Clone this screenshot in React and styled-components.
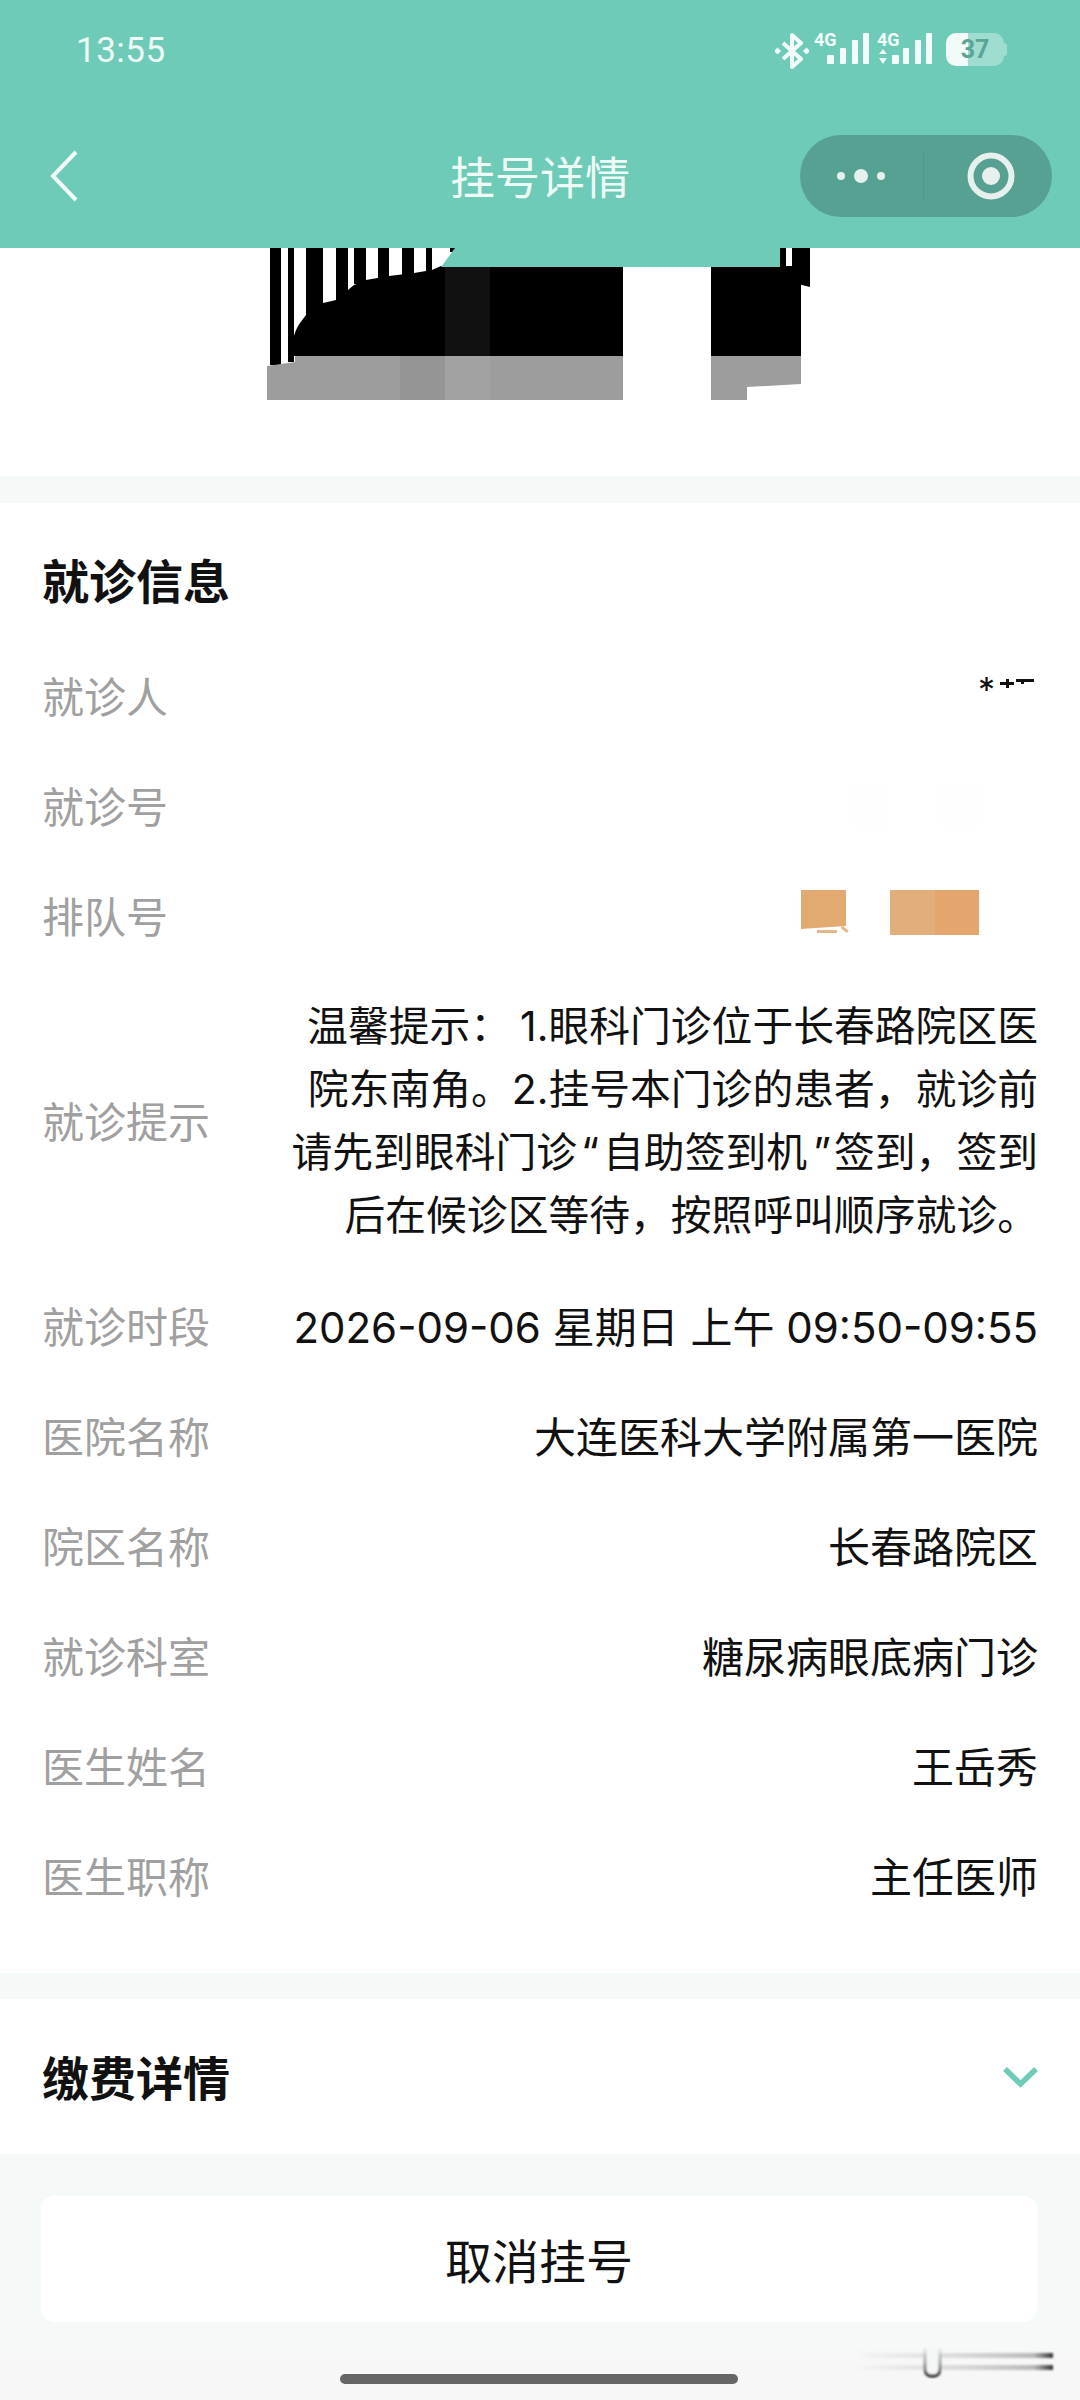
import React from 'react';
import styled, { createGlobalStyle } from 'styled-components';

const GlobalStyle = createGlobalStyle`
  html, body {
    margin: 0;
    padding: 0;
    background: #f5faf9;
  }
  body {
    font-family: Inter, "Noto Sans CJK SC", sans-serif;
  }
`;

const Page = styled.div`
  position: relative;
  width: 1080px;
  height: 2400px;
  overflow: hidden;
  background: linear-gradient(#f5faf9 2340px, #f7f7f7 2360px);
`;

const Header = styled.header`
  height: 248px;
  background: #6dcbb7;
  color: #eefaf6;
`;

const StatusBar = styled.div`
  height: 100px;
  box-sizing: border-box;
  padding: 33px 76px 0 76px;
  display: flex;
  justify-content: space-between;
  align-items: flex-start;
`;

const Clock = styled.span`
  font-family: Roboto, sans-serif;
  font-size: 35px;
  line-height: 35px;
  letter-spacing: 0.5px;
`;

const StatusIcons = styled.div`
  display: flex;
  align-items: flex-start;
  gap: 8px;
`;

const BluetoothSvg = styled.svg`
  margin-right: -3px;
`;

const SignalWrap = styled.div`
  position: relative;
  width: 55px;
  height: 32px;
`;

const NetworkLabel = styled.span`
  position: absolute;
  left: 0;
  top: -2px;
  font-family: Roboto, sans-serif;
  font-weight: 700;
  font-size: 18px;
  line-height: 18px;
  color: #f2fbf9;
`;

const Battery = styled.div`
  position: relative;
  width: 58px;
  height: 33px;
  margin-left: 6px;
  border-radius: 10px;
  background: linear-gradient(90deg, #f2fbf9 22px, rgba(255, 255, 255, 0.34) 22px);
  color: #5aa596;
  font-family: Roboto, sans-serif;
  font-weight: 700;
  font-size: 25px;
  line-height: 33px;
  text-align: center;

  &::after {
    content: "";
    position: absolute;
    right: -3px;
    top: 10px;
    width: 3px;
    height: 13px;
    border-radius: 0 3px 3px 0;
    background: rgba(255, 255, 255, 0.34);
  }
`;

const NavBar = styled.div`
  position: relative;
  height: 148px;
  box-sizing: border-box;
  padding: 35px 28px 31px 50px;
  display: flex;
  align-items: center;
  justify-content: space-between;
`;

const NavTitle = styled.h1`
  margin: 0;
  font-family: "Noto Sans CJK SC", sans-serif;
  font-size: 45px;
  font-weight: 400;
  line-height: 82px;
  position: absolute;
  left: 0;
  width: 1080px;
  text-align: center;
`;

const Capsule = styled.div`
  position: relative;
  width: 252px;
  height: 82px;
  border-radius: 41px;
  background: #57a192;
  display: flex;
  align-items: center;
`;

const CapsuleCell = styled.div`
  flex: 1;
  height: 50px;
  box-sizing: border-box;
  padding-left: ${p => p.$shift || 0}px;
  display: flex;
  align-items: center;
  justify-content: center;
  &:first-child {
    border-right: 1px solid #50978a;
  }
`;

const BarcodeSection = styled.section`
  height: 228px;
  background: #fff;
  padding-left: 266px;
`;

const Gap = styled.div`
  height: ${p => p.$h}px;
`;

const Card = styled.section`
  background: #fff;
  padding: 0 42px;
`;

const InfoCard = styled(Card)`
  padding-bottom: 42px;
`;

const CardTitle = styled.h2`
  margin: 0;
  height: 138px;
  box-sizing: border-box;
  padding-top: 12px;
  display: flex;
  align-items: center;
  font-family: "Noto Sans CJK SC", sans-serif;
  font-size: 47px;
  font-weight: 700;
  color: #111;
`;

const Row = styled.div`
  min-height: 110px;
  box-sizing: border-box;
  padding-bottom: 3px;
  display: flex;
  align-items: center;
  justify-content: space-between;
  font-size: 42px;
`;

const Label = styled.span`
  color: #a0a0a0;
  flex-shrink: 0;
`;

const Value = styled.span`
  color: #111;
  text-align: right;
`;

const TipText = styled(Value)`
  display: flex;
  flex-direction: column;
  line-height: 63px;
  padding: 24px 0 21px;
  font-size: 40.800px;
`;

const TipInset = styled.span`
  margin: 0 ${p => p.$r || 0}px 0 ${p => p.$l || 0}px;
`;

const Masked = styled.span`
  display: flex;
  align-items: flex-start;
  height: 50px;
  margin-right: 3px;
`;

const Star = styled.span`
  color: #111;
  font-size: 34px;
  line-height: 34px;
  margin-top: 3px;
`;

const MaskedStroke = styled.svg`
  margin: 9px 0 0 -8px;
`;

const FaintBlocks = styled.div`
  display: flex;
  gap: 50px;
  margin-right: 59px;
`;

const FaintBlock = styled.div`
  width: 40px;
  height: 42px;
  background: #fefefe;
`;

const OrangeBlocks = styled.div`
  display: flex;
  gap: 44px;
  margin: 0 59px 5px 0;
`;

const OrangeBlock = styled.div`
  width: ${p => p.$w}px;
  height: 45px;
`;

const PayCard = styled(Card)`
  height: 155px;
  display: flex;
  align-items: center;
  justify-content: space-between;
`;

const PayTitle = styled(CardTitle)`
  height: auto;
  padding: 0 0 3px;
`;

const CancelButton = styled.div`
  margin: 42px 43px 0 41px;
  height: 126px;
  box-sizing: border-box;
  padding-bottom: 2px;
  border-radius: 14px;
  background: #fff;
  display: flex;
  align-items: center;
  justify-content: center;
  font-family: "Noto Sans CJK SC", sans-serif;
  font-size: 47px;
  color: #111;
`;

const HomeBar = styled.div`
  position: absolute;
  left: 340px;
  top: 2374px;
  width: 398px;
  height: 10px;
  border-radius: 5px;
  background: #666;
`;

const Watermark = styled.svg`
  position: absolute;
  left: 850px;
  top: 2340px;
`;

const BluetoothIcon = () => (
  <BluetoothSvg width="34" height="36" viewBox="0 0 34 36" fill="none">
    <path d="M8 10l18 16-9 8V2l9 8L8 26" stroke="#f2fbf9" strokeWidth="4" strokeLinejoin="round" />
    <rect x="0" y="15.500" width="5" height="5" transform="rotate(45 2.500 18)" fill="#f2fbf9" />
    <rect x="29" y="15.500" width="5" height="5" transform="rotate(45 31.500 18)" fill="#f2fbf9" />
  </BluetoothSvg>
);

const Signal = ({ arrows }) => (
  <SignalWrap>
    <NetworkLabel>4G</NetworkLabel>
    <svg width="55" height="32" viewBox="0 0 55 32" fill="#f2fbf9">
      {arrows && (
        <g>
          <path d="M2 21l4-5 4 5z" />
          <path d="M2 25l4 6 4-6z" />
        </g>
      )}
      <rect x={arrows ? 15 : 13} y="22" width="7" height="9" rx="1" />
      <rect x="26" y="15" width="6" height="16" rx="1" />
      <rect x="38" y="7" width="6" height="24" rx="1" />
      <rect x="49" y="0" width="6" height="31" rx="1" />
    </svg>
  </SignalWrap>
);

const BackIcon = () => (
  <svg width="28" height="52" viewBox="0 0 28 52" fill="none">
    <path d="M26 2L3 26l23 24" stroke="#f2fbf9" strokeWidth="4" />
  </svg>
);

const DotsIcon = () => (
  <svg width="50" height="16" viewBox="0 0 50 16" fill="#e6f1ee">
    <circle cx="5" cy="8" r="4" />
    <circle cx="25" cy="8" r="7" />
    <circle cx="45" cy="8" r="4" />
  </svg>
);

const TargetIcon = () => (
  <svg width="48" height="48" viewBox="0 0 48 48" fill="none">
    <circle cx="24" cy="24" r="20.500" stroke="#e6f1ee" strokeWidth="6" />
    <circle cx="24" cy="24" r="9" fill="#e6f1ee" />
  </svg>
);

const ChevronIcon = () => (
  <svg width="35" height="22" viewBox="0 0 35 22" fill="none">
    <path d="M2 3l15.500 15L33 3" stroke="#6dcbb7" strokeWidth="5.500" />
  </svg>
);

// the barcode is painted over in the picture, only these leftovers show
const Barcode = () => (
  <svg width="548" height="154" viewBox="266 248 548 154">
    <rect x="270" y="248" width="11" height="117" fill="#000" />
    <rect x="288" y="248" width="6" height="114" fill="#000" />
    <rect x="306" y="248" width="17" height="70" fill="#000" />
    <rect x="336" y="248" width="12" height="52" fill="#000" />
    <rect x="354" y="248" width="12" height="36" fill="#000" />
    <rect x="378" y="248" width="11" height="30" fill="#000" />
    <rect x="402" y="248" width="12" height="27" fill="#000" />
    <rect x="426" y="248" width="6" height="24" fill="#000" />
    <path d="M293 356V340Q295 330 300 323L306 315V308L323 303L336 300L348 290L354 285L366 280L389 276L414 273L432 270L441 266L623 266V356Z" fill="#000" />
    <rect x="445" y="266" width="45" height="90" fill="#111" />
    <rect x="711" y="266" width="90" height="90" fill="#000" />
    <path d="M267 400V366L295 362V356H623V400Z" fill="#9d9d9d" />
    <rect x="400" y="356" width="45" height="44" fill="#959595" />
    <rect x="445" y="356" width="45" height="44" fill="#a2a2a2" />
    <path d="M711 356H801V384L747 387V400H711Z" fill="#9d9d9d" />
    <rect x="780" y="248" width="6" height="36" fill="#000" />
    <rect x="792" y="248" width="6" height="36" fill="#000" />
    <path d="M798 248H810V287L798 284Z" fill="#000" />
    <path d="M450 248H455V252L450 252Z" fill="#000" />
    <path d="M455 248H780V267H441Z" fill="#6dcbb7" />
  </svg>
);

const rows = [
  ['就诊时段', '2026-09-06 星期日 上午 09:50-09:55'],
  ['医院名称', '大连医科大学附属第一医院'],
  ['院区名称', '长春路院区'],
  ['就诊科室', '糖尿病眼底病门诊'],
  ['医生姓名', '王岳秀'],
  ['医生职称', '主任医师'],
];

export default function App() {
  return (
    <Page>
      <GlobalStyle />
      <Header>
        <StatusBar>
          <Clock>13:55</Clock>
          <StatusIcons>
            <BluetoothIcon />
            <Signal />
            <Signal arrows />
            <Battery>37</Battery>
          </StatusIcons>
        </StatusBar>
        <NavBar>
          <BackIcon />
          <NavTitle>挂号详情</NavTitle>
          <Capsule>
            <CapsuleCell><DotsIcon /></CapsuleCell>
            <CapsuleCell $shift={6}><TargetIcon /></CapsuleCell>
          </Capsule>
        </NavBar>
      </Header>

      <BarcodeSection>
        <Barcode />
      </BarcodeSection>
      <Gap $h={27} />

      <InfoCard>
        <CardTitle>就诊信息</CardTitle>
        <Row>
          <Label>就诊人</Label>
          <Masked>
            <Star>*</Star>
            <MaskedStroke width="48" height="12" viewBox="0 0 48 12" fill="#111">
              <rect x="13" y="3" width="14" height="3" />
              <rect x="19" y="0" width="3" height="9" />
              <rect x="29" y="0" width="18" height="3" />
              <rect x="34" y="2" width="3" height="3" />
            </MaskedStroke>
          </Masked>
        </Row>
        <Row>
          <Label>就诊号</Label>
          <FaintBlocks>
            <FaintBlock />
            <FaintBlock />
          </FaintBlocks>
        </Row>
        <Row>
          <Label>排队号</Label>
          <OrangeBlocks>
            <OrangeBlock $w={45}>
              <svg width="50" height="48" viewBox="0 0 50 48">
                <path d="M0 0H45V36L0 39Z" fill="#e2a970" />
                <rect x="16" y="40" width="20" height="3" fill="#e4b787" />
                <rect x="40" y="38" width="8" height="3" transform="rotate(40 44 39)" fill="#e4b787" />
              </svg>
            </OrangeBlock>
            <OrangeBlock $w={89}>
              <svg width="89" height="45" viewBox="0 0 89 45">
                <rect width="45" height="45" fill="#e2ae7c" />
                <rect x="45" width="44" height="45" fill="#e5a66d" />
              </svg>
            </OrangeBlock>
          </OrangeBlocks>
        </Row>
        <Row>
          <Label>就诊提示</Label>
          <TipText>
            <span>温馨提示：<TipInset $l={9}>1.</TipInset>眼科门诊位于长春路院区医</span>
            <span>院东南角。2.挂号本门诊的患者，就诊前</span>
            <span>请先到眼科门诊<TipInset $l={4} $r={4}>“</TipInset>自助签到机<TipInset $l={6} $r={3}>”</TipInset>签到，签到</span>
            <span>后在候诊区等待，按照呼叫顺序就诊。</span>
          </TipText>
        </Row>
        {rows.map(([label, value]) => (
          <Row key={label}>
            <Label>{label}</Label>
            <Value>{value}</Value>
          </Row>
        ))}
      </InfoCard>
      <Gap $h={26} />

      <PayCard>
        <PayTitle>缴费详情</PayTitle>
        <ChevronIcon />
      </PayCard>

      <CancelButton>取消挂号</CancelButton>
      <HomeBar />
      <Watermark width="210" height="44" viewBox="0 0 210 44" fill="none">
        <defs>
          <linearGradient id="wmBar" x1="0" x2="1" y1="0" y2="0">
            <stop offset="0" stopColor="#bbb" stopOpacity="0" />
            <stop offset="0.4" stopColor="#ccc" stopOpacity="0.5" />
            <stop offset="0.9" stopColor="#aaa" stopOpacity="0.8" />
            <stop offset="1" stopColor="#333" />
          </linearGradient>
          <linearGradient id="wmPill" x1="0" x2="0" y1="0" y2="1">
            <stop offset="0" stopColor="#888" stopOpacity="0.1" />
            <stop offset="0.8" stopColor="#777" />
            <stop offset="1" stopColor="#111" />
          </linearGradient>
          <filter id="wmBlur">
            <feGaussianBlur stdDeviation="0.8" />
          </filter>
        </defs>
        <g filter="url(#wmBlur)">
          <rect x="5" y="13" width="198" height="5" fill="url(#wmBar)" />
          <rect x="5" y="25" width="198" height="5" fill="url(#wmBar)" />
          <rect x="75" y="8" width="15" height="28" rx="6" fill="#f5f6f6" />
          <path d="M75 8V29Q75 36 82.500 36Q90 36 90 29V8" stroke="url(#wmPill)" strokeWidth="3" />
        </g>
      </Watermark>
    </Page>
  );
}
